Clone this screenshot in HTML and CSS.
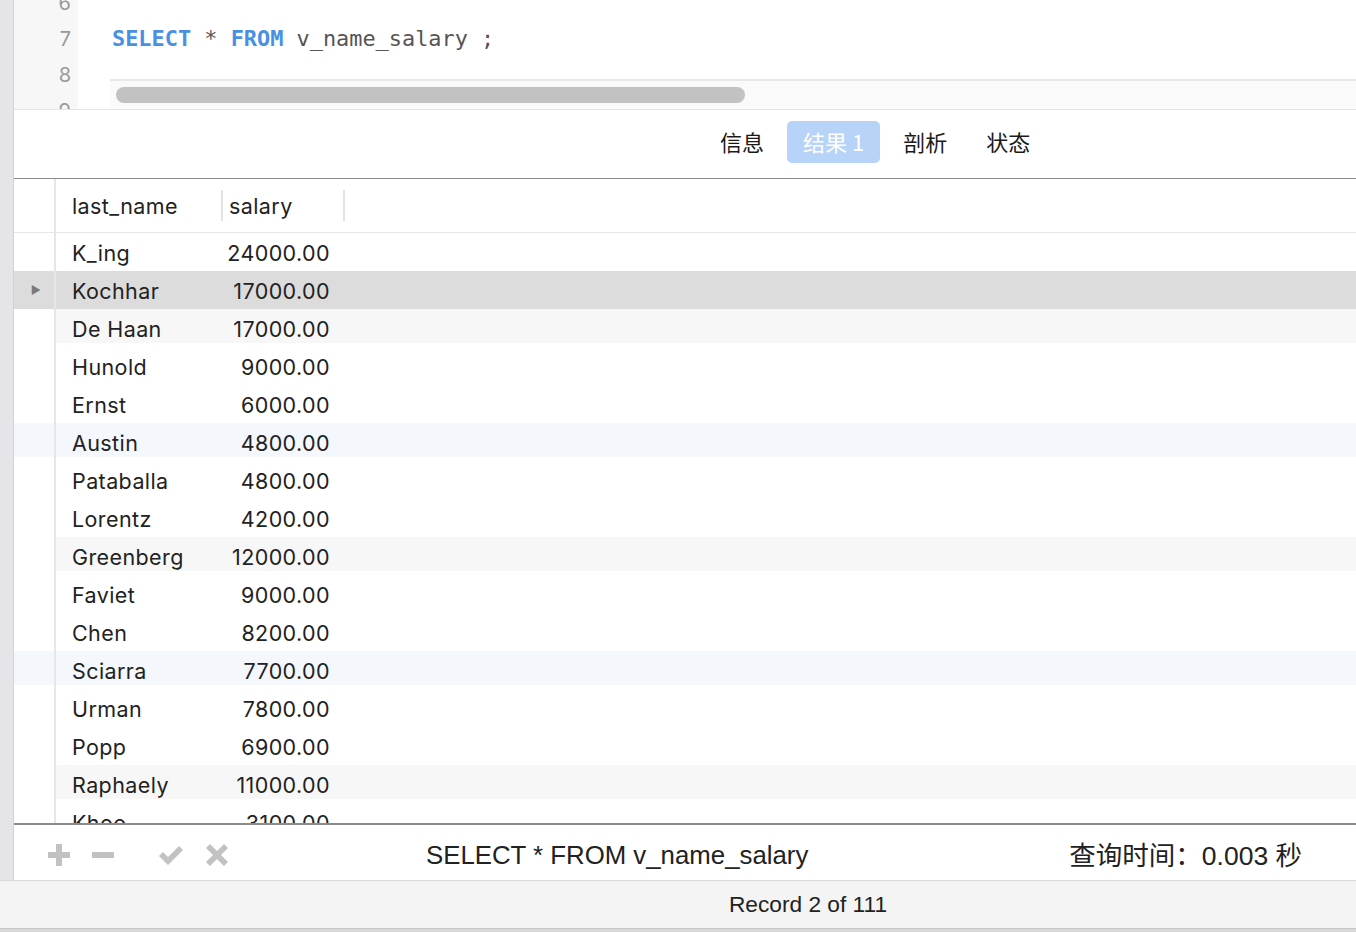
FILE: index.html
```html
<!DOCTYPE html>
<html lang="zh">
<head>
<meta charset="utf-8">
<title>Query</title>
<link rel="stylesheet" href="styles.css">
</head>
<body>
<div class="app">
  <div class="top">
    <div class="side-strip"></div>
    <div class="main">
      <div class="editor">
        <div class="gutter">
          <div class="ln">6</div>
          <div class="ln">7</div>
          <div class="ln">8</div>
          <div class="ln">9</div>
        </div>
        <div class="code-area">
          <div class="code-lines">
            <div class="code-line"></div>
            <div class="code-line"><span class="kw">SELECT</span> * <span class="kw">FROM</span> v_name_salary ;</div>
            <div class="code-line"></div>
          </div>
          <div class="hscroll"><div class="thumb"></div></div>
        </div>
      </div>
      <div class="tabs">
        <div class="tab">信息</div>
        <div class="tab active">结果 1</div>
        <div class="tab">剖析</div>
        <div class="tab">状态</div>
      </div>
      <div class="grid">
        <div class="row head">
          <div class="ind"></div>
          <div class="cell name"><span>last_name</span><i class="sep"></i></div>
          <div class="cell sal-h"><span>salary</span><i class="sep"></i></div>
        </div>
        <div class="row"><div class="ind"></div><div class="cell name">K_ing</div><div class="cell sal">24000.00</div></div>
        <div class="row sel"><div class="ind"><span class="arrow">&#9654;</span></div><div class="cell name">Kochhar</div><div class="cell sal">17000.00</div></div>
        <div class="row gray"><div class="ind"></div><div class="cell name">De Haan</div><div class="cell sal">17000.00</div></div>
        <div class="row"><div class="ind"></div><div class="cell name">Hunold</div><div class="cell sal">9000.00</div></div>
        <div class="row"><div class="ind"></div><div class="cell name">Ernst</div><div class="cell sal">6000.00</div></div>
        <div class="row blue"><div class="ind"></div><div class="cell name">Austin</div><div class="cell sal">4800.00</div></div>
        <div class="row"><div class="ind"></div><div class="cell name">Pataballa</div><div class="cell sal">4800.00</div></div>
        <div class="row"><div class="ind"></div><div class="cell name">Lorentz</div><div class="cell sal">4200.00</div></div>
        <div class="row gray"><div class="ind"></div><div class="cell name">Greenberg</div><div class="cell sal">12000.00</div></div>
        <div class="row"><div class="ind"></div><div class="cell name">Faviet</div><div class="cell sal">9000.00</div></div>
        <div class="row"><div class="ind"></div><div class="cell name">Chen</div><div class="cell sal">8200.00</div></div>
        <div class="row blue"><div class="ind"></div><div class="cell name">Sciarra</div><div class="cell sal">7700.00</div></div>
        <div class="row"><div class="ind"></div><div class="cell name">Urman</div><div class="cell sal">7800.00</div></div>
        <div class="row"><div class="ind"></div><div class="cell name">Popp</div><div class="cell sal">6900.00</div></div>
        <div class="row gray"><div class="ind"></div><div class="cell name">Raphaely</div><div class="cell sal">11000.00</div></div>
        <div class="row"><div class="ind"></div><div class="cell name">Khoo</div><div class="cell sal">3100.00</div></div>
      </div>
      <div class="toolbar">
        <div class="icons">
          <svg class="ic" width="22" height="22" viewBox="0 0 22 22"><path d="M8 0h6v8h8v6h-8v8H8v-8H0V8h8z" fill="#c2c2c2"/></svg>
          <svg class="ic" width="22" height="22" viewBox="0 0 22 22"><rect x="0" y="8" width="22" height="6" fill="#c2c2c2"/></svg>
          <svg class="ic gap" width="26" height="22" viewBox="0 0 26 22"><path d="M1 12l4-4 5 5L21 2l4 4L10 21z" fill="#c2c2c2"/></svg>
          <svg class="ic" width="22" height="22" viewBox="0 0 22 22"><path d="M4 0l7 7 7-7 4 4-7 7 7 7-4 4-7-7-7 7-4-4 7-7-7-7z" fill="#c2c2c2"/></svg>
        </div>
        <div class="sql">SELECT * FROM v_name_salary</div>
        <div class="time">查询时间：0.003 秒</div>
      </div>
    </div>
  </div>
  <div class="statusbar">Record 2 of 111</div>
  <div class="bottom-edge"></div>
</div>
</body>
</html>
```

FILE: styles.css
```css
html, body {
  margin: 0;
  padding: 0;
}
body {
  width: 1356px;
  height: 932px;
  overflow: hidden;
  background: #ffffff;
  font-family: Inter, "Noto Sans CJK SC", sans-serif;
  color: #222222;
}
.app {
  display: flex;
  flex-direction: column;
  height: 932px;
}
.top {
  display: flex;
  height: 880px;
}
.side-strip {
  width: 13px;
  background: #e5e4e9;
  border-right: 1px solid #d2d2d6;
  flex: none;
}
.main {
  flex: 1;
  display: flex;
  flex-direction: column;
  min-width: 0;
}
/* editor */
.editor {
  height: 109px;
  border-bottom: 1px solid #e6e6e6;
  display: flex;
  overflow: hidden;
  flex: none;
}
.gutter {
  width: 64px;
  background: #f7f7f7;
  margin-top: -15px;
  padding-right: 7px;
  box-sizing: border-box;
  flex: none;
}
.ln {
  height: 36px;
  line-height: 36px;
  text-align: right;
  font-family: Inter, sans-serif;
  font-size: 20px;
  color: #9a9a9a;
}
.code-area {
  flex: 1;
  display: flex;
  flex-direction: column;
  min-width: 0;
}
.code-lines {
  flex: 1;
  overflow: hidden;
  padding-left: 34px;
}
.code-lines .code-line:first-child {
  margin-top: -15px;
}
.code-line {
  height: 36px;
  line-height: 36px;
  font-family: "DejaVu Sans Mono", monospace;
  font-size: 21.9px;
  color: #555555;
  white-space: pre;
}
.kw {
  color: #4a90e2;
  font-weight: bold;
}
.hscroll {
  height: 28px;
  margin-left: 32px;
  background: #fafafa;
  border-top: 2px solid #e8e8e8;
  display: flex;
  align-items: center;
  flex: none;
}
.thumb {
  width: 629px;
  height: 16px;
  border-radius: 8px;
  background: #c2c2c2;
  margin-left: 6px;
}
/* tabs */
.tabs {
  height: 69px;
  box-sizing: border-box;
  padding-bottom: 5px;
  border-bottom: 1px solid #8c8c8c;
  display: flex;
  align-items: center;
  gap: 7px;
  padding-left: 690px;
  flex: none;
  font-family: "Noto Sans CJK SC", sans-serif;
  font-size: 22px;
}
.tab {
  height: 42px;
  line-height: 41px;
  padding: 0 16px;
  border-radius: 5px;
  color: #1a1a1a;
}
.tab.active {
  background: #b8d3f8;
  color: #ffffff;
}
/* grid */
.grid {
  flex: 1;
  overflow: hidden;
  border-bottom: 2px solid #8c8c8c;
}
.row {
  display: flex;
  height: 38px;
  align-items: stretch;
  font-size: 21.5px;
  letter-spacing: 0.4px;
}
.row.head {
  height: 53px;
  border-bottom: 1px solid #e6e6e6;
}
.ind {
  width: 40px;
  border-right: 2px solid #e6e6e6;
  flex: none;
  display: flex;
  align-items: center;
  justify-content: center;
  box-sizing: content-box;
}
.cell {
  display: flex;
  align-items: center;
  box-sizing: border-box;
  padding-top: 2px;
  white-space: nowrap;
}
.row.head .cell {
  padding-top: 0;
}
.cell.name {
  width: 167px;
  padding-left: 16px;
  position: relative;
}
.cell.sal {
  width: 120px;
  justify-content: flex-end;
  padding-right: 13px;
}
.cell.sal-h {
  width: 122px;
  padding-left: 6px;
  position: relative;
}
.sep {
  position: absolute;
  right: 0;
  top: 11px;
  bottom: 11px;
  width: 2px;
  background: #e2e2e2;
}
.row.sel {
  background: #dcdcdc;
}
.row.gray {
  background: linear-gradient(#f7f7f7, #f7f7f7) 42px 0 / 100% 34px no-repeat;
}
.row.blue {
  background: linear-gradient(#f4f7fc, #f4f7fc) top / 100% 34px no-repeat;
}
.arrow {
  font-size: 11px;
  color: #7a7a7a;
  margin-left: 4px;
}
/* toolbar */
.toolbar {
  height: 55px;
  box-sizing: border-box;
  padding-top: 5px;
  display: flex;
  align-items: center;
  flex: none;
  background: #ffffff;
}
.icons {
  display: flex;
  align-items: center;
  padding-left: 34px;
  gap: 22px;
}
.ic.gap {
  margin-left: 22px;
}
.sql {
  margin-left: 198px;
  font-family: "Liberation Sans", sans-serif;
  font-size: 25.8px;
  color: #222222;
}
.time {
  margin-left: auto;
  margin-bottom: 4px;
  padding-right: 54px;
  font-family: "Liberation Sans", "Noto Sans CJK SC", sans-serif;
  font-size: 26.5px;
  color: #222222;
}
/* status */
.statusbar {
  height: 47px;
  border-top: 1px solid #dadada;
  border-bottom: 1px solid #c6c6c6;
  background: #f4f4f4;
  display: flex;
  align-items: center;
  justify-content: center;
  padding-left: 260px;
  font-family: "Liberation Sans", sans-serif;
  font-size: 22.7px;
  color: #222222;
  flex: none;
}
.bottom-edge {
  flex: 1;
  background: #d9d9d9;
}
```
